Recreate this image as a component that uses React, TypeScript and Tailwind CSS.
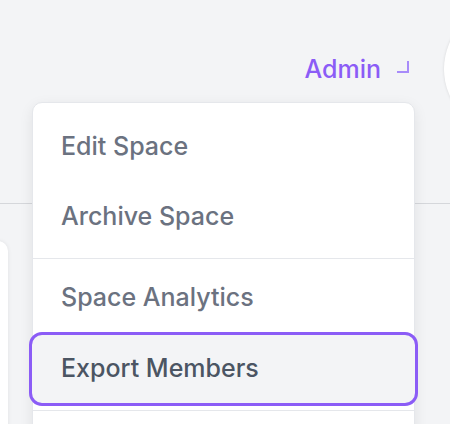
import React from "react";

const menuItems = ["Edit Space", "Archive Space"];

export default function App() {
  return (
    <div className="relative w-[450px] h-[424px] overflow-hidden bg-[#f3f4f6] font-['Inter',sans-serif]">
      {/* top bar */}
      <header className="h-[204px] border-b border-[#d5d7db]">
        <div className="flex h-[138px] items-center justify-end -mr-[124px]">
          <span className="text-[25px] font-medium text-[#8b5cf6] leading-none">Admin</span>
          <span className="ml-[16px] mb-[5px] h-[12px] w-[12px] border-r-2 border-b-2 border-[#a78bfa]" />
          <div className="ml-[35px] h-[130px] w-[130px] shrink-0 rounded-full bg-white shadow-[0_0_3px_rgba(0,0,0,0.12)]" />
        </div>
      </header>

      {/* page content */}
      <div className="pt-[37px]">
        <div className="-ml-[100px] h-[300px] w-[108px] rounded-[10px] bg-white shadow-[0_0_4px_rgba(0,0,0,0.08)]" />
      </div>

      {/* dropdown */}
      <div className="absolute left-[32px] top-[102px] w-[383px] rounded-[10px] border border-[#e5e7eb] bg-white pt-[7px] shadow-[0_4px_14px_rgba(0,0,0,0.08)]">
        {menuItems.map((label) => (
          <div key={label} className="flex h-[70px] items-center px-[28px] pt-[4px] text-[25px] font-medium text-[#6b7280]">
            {label}
          </div>
        ))}
        <div className="mt-2 mb-[3px] h-px bg-[#e5e7eb]" />
        <div className="flex h-[70px] items-center px-[28px] pt-[2px] text-[25px] font-medium text-[#6b7280]">
          Space Analytics
        </div>
        <div className="-mx-[4px] flex h-[74px] items-center rounded-[13px] border-[3px] border-[#8b5cf6] bg-[#f3f4f6] px-[29px] text-[25px] font-medium text-[#4b5563]">
          Export Members
        </div>
        <div className="mt-[4px] h-px bg-[#e5e7eb]" />
        <div className="h-[60px]" />
      </div>
    </div>
  );
}
